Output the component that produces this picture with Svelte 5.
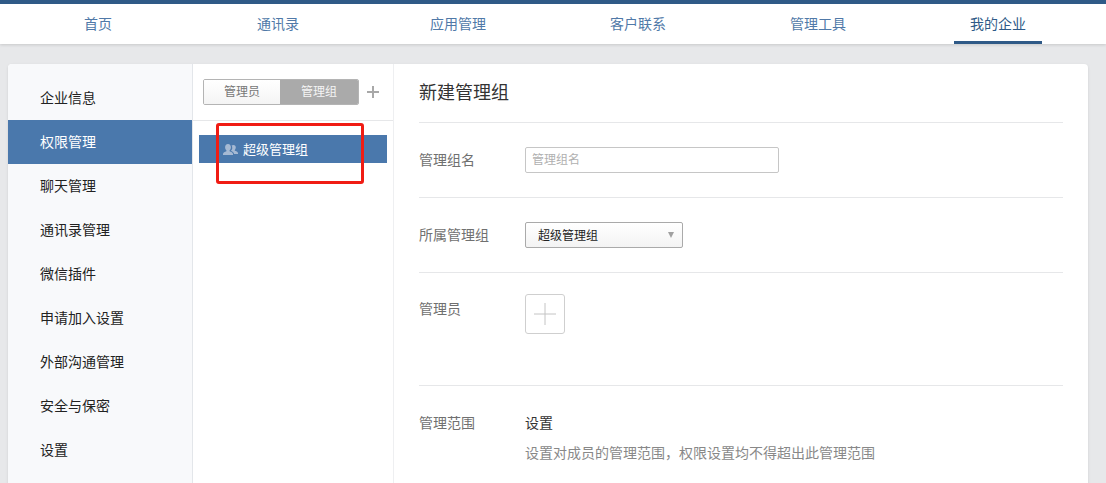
<script>
  const navItems = ["首页", "通讯录", "应用管理", "客户联系", "管理工具", "我的企业"];
  const menuItems = ["企业信息", "权限管理", "聊天管理", "通讯录管理", "微信插件", "申请加入设置", "外部沟通管理", "安全与保密", "设置"];
</script>

<div class="page">
  <header class="topbar">
    <nav class="nav">
      {#each navItems as item, i}
        <div class="nav-item" class:active={i === 5}><span>{item}</span></div>
      {/each}
    </nav>
  </header>

  <main class="card">
    <aside class="menu">
      {#each menuItems as item, i}
        <div class="menu-item" class:active={i === 1}>{item}</div>
      {/each}
    </aside>

    <section class="groups">
      <div class="groups-head">
        <div class="tabs">
          <div class="tab">管理员</div>
          <div class="tab on">管理组</div>
        </div>
        <svg class="add-group" width="14" height="14" viewBox="0 0 14 14" aria-hidden="true">
          <path d="M6 1h2v5h5v2H8v5H6V8H1V6h5z" fill="#a8a8a8" />
        </svg>
      </div>
      <div class="group-row">
        <svg width="15" height="11" viewBox="0 0 15 11" aria-hidden="true">
          <path d="M10.5 1c1.500 0 2.300 1.100 2.300 2.600 0 1-.4 1.800-1 2.300v.8c1.200.4 3.200 1.100 3.200 2.300v1H11c0-1.600-1.300-2.500-2.800-3.100v-1C9 6 9.300 5 9.200 3.500 9.200 2.700 9 2 8.500 1.600 9 1.200 9.700 1 10.500 1z" fill="#a6b9d3" />
          <path d="M5 0c1.900 0 2.900 1.300 2.900 3.200 0 1.300-.5 2.300-1.300 3v1C8 7.700 10 8.500 10 10v1H0v-1c0-1.500 2-2.300 3.400-2.800v-1c-.8-.7-1.300-1.700-1.300-3C2.100 1.300 3.100 0 5 0z" fill="#a6b9d3" />
        </svg>
        <span>超级管理组</span>
      </div>
      <div class="annotation"></div>
    </section>

    <section class="form">
      <h1>新建管理组</h1>

      <div class="row row-name">
        <div class="label">管理组名</div>
        <input class="name-input" type="text" placeholder="管理组名" />
      </div>

      <div class="row row-parent">
        <div class="label">所属管理组</div>
        <div class="select">
          <span>超级管理组</span>
          <i class="caret"></i>
        </div>
      </div>

      <div class="row row-admins">
        <div class="label">管理员</div>
        <div class="add-box">
          <svg width="22" height="22" viewBox="0 0 22 22" aria-hidden="true">
            <path d="M11 0v22M0 11h22" stroke="#c4c4c4" stroke-width="1" fill="none" />
          </svg>
        </div>
      </div>

      <div class="row row-scope">
        <div class="label">管理范围</div>
        <div class="scope">
          <div class="scope-title">设置</div>
          <div class="scope-desc">设置对成员的管理范围，权限设置均不得超出此管理范围</div>
        </div>
      </div>
    </section>
  </main>
</div>

<style>
  :global(body) {
    margin: 0;
    background: #e7e8ea;
    overflow: hidden;
  }

  .page {
    height: 483px;
    overflow: hidden;
    font-family: "Liberation Sans", "Noto Sans CJK SC", sans-serif;
    font-size: 14px;
    color: #222;
  }

  .topbar {
    height: 40px;
    border-top: 4px solid #2f5a87;
    background: #fff;
    box-shadow: 0 1px 3px rgba(0, 0, 0, 0.14);
  }

  .nav {
    display: flex;
    margin-left: 8px;
    height: 100%;
  }

  .nav-item {
    width: 180px;
    display: flex;
    justify-content: center;
    color: #5079a8;
  }

  .nav-item span {
    height: 37px;
    line-height: 40px;
  }

  .nav-item.active {
    color: #2f5a87;
  }

  .nav-item.active span {
    width: 88px;
    text-align: center;
    border-bottom: 3px solid #2f5a87;
  }

  .card {
    position: relative;
    display: flex;
    width: 1080px;
    height: 440px;
    margin: 20px 0 0 8px;
    background: #fff;
    border-radius: 4px;
    box-shadow: 0 1px 3px rgba(0, 0, 0, 0.1);
    overflow: hidden;
  }

  .menu {
    width: 184px;
    flex: none;
    padding-top: 12px;
    background: #f8f9fb;
    border-right: 1px solid #e3e6ea;
  }

  .menu-item {
    height: 44px;
    line-height: 44px;
    padding-left: 32px;
    color: #222;
  }

  .menu-item.active {
    background: #4a78ac;
    color: #fff;
  }

  .groups {
    position: relative;
    width: 200px;
    flex: none;
    border-right: 1px solid #eeeff1;
  }

  .groups-head {
    display: flex;
    align-items: center;
    height: 56px;
    padding: 0 10px;
    border-bottom: 1px solid #e6e7e9;
  }

  .tabs {
    display: flex;
    width: 156px;
    height: 26px;
    box-sizing: border-box;
    border: 1px solid #b4b4b4;
    border-radius: 2px;
    overflow: hidden;
    font-size: 12px;
    line-height: 24px;
    text-align: center;
  }

  .tab {
    width: 76px;
    flex: none;
    color: #777;
    background: linear-gradient(#fff, #f4f4f4);
  }

  .tab.on {
    flex: 1;
    background: #aaa;
    color: #f4f4f4;
  }

  .add-group {
    margin-left: 7px;
  }

  .group-row {
    display: flex;
    align-items: center;
    gap: 5px;
    height: 28px;
    margin: 14px 6px 0;
    padding-left: 24px;
    background: #4a78ac;
    color: #fff;
    font-size: 13px;
  }

  .group-row span {
    padding-bottom: 2px;
  }

  .annotation {
    position: absolute;
    left: 23px;
    top: 59px;
    width: 148px;
    height: 61px;
    box-sizing: border-box;
    border: 3px solid #f01c14;
    border-radius: 3px;
  }

  .form {
    flex: 1;
    padding: 0 25px;
    min-width: 0;
  }

  h1 {
    height: 59px;
    margin: 0;
    line-height: 58px;
    font-size: 18px;
    font-weight: 400;
    color: #333;
    border-bottom: 1px solid #e6e7e9;
    box-sizing: border-box;
  }

  .row {
    display: flex;
    box-sizing: border-box;
    border-bottom: 1px solid #e6e7e9;
  }

  .label {
    width: 106px;
    flex: none;
    color: #707070;
  }

  .row-name {
    height: 75px;
    align-items: center;
  }

  .row-name .label,
  .row-parent .label {
    padding-bottom: 2px;
  }

  .name-input {
    width: 254px;
    height: 26px;
    box-sizing: border-box;
    padding: 0 6px;
    border: 1px solid #c6c6c6;
    border-radius: 2px;
    outline: none;
    font: inherit;
    font-size: 12px;
  }

  .name-input::placeholder {
    color: #b0b0b0;
    opacity: 1;
  }

  .row-parent {
    height: 75px;
    align-items: center;
  }

  .select {
    display: flex;
    align-items: center;
    justify-content: space-between;
    width: 158px;
    height: 26px;
    box-sizing: border-box;
    padding: 0 8px 0 12px;
    border: 1px solid #aaa;
    border-radius: 2px;
    background: linear-gradient(#fff, #f3f3f3);
    font-size: 12px;
    color: #222;
  }

  .select span {
    padding-bottom: 2px;
  }

  .caret {
    width: 0;
    height: 0;
    border-left: 3px solid transparent;
    border-right: 3px solid transparent;
    border-top: 6px solid #a0a0a0;
  }

  .row-admins {
    height: 113px;
    padding-top: 21px;
  }

  .row-admins .label {
    line-height: 30px;
  }

  .add-box {
    display: flex;
    align-items: center;
    justify-content: center;
    width: 40px;
    height: 40px;
    box-sizing: border-box;
    border: 1px solid #cfcfcf;
    border-radius: 3px;
  }

  .row-scope {
    border-bottom: 0;
    padding-top: 27px;
    line-height: 20px;
  }

  .scope-title {
    color: #333;
  }

  .scope-desc {
    margin-top: 10px;
    color: #888;
  }
</style>
